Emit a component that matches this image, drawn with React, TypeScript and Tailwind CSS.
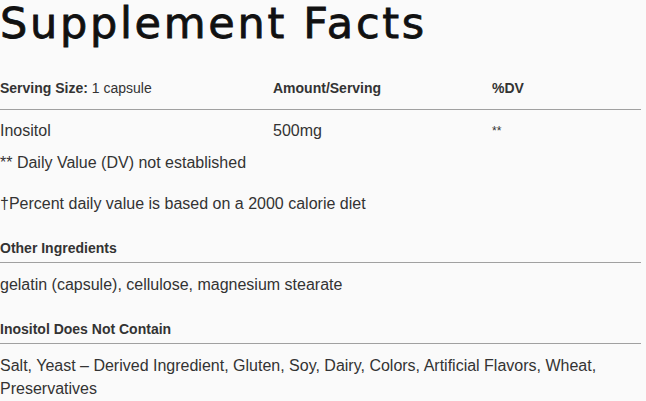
const rows = [{ name: "Inositol", amount: "500mg", dv: "**" }];

const App = () => {
  return (
    <div className="min-h-[401px] w-[646px] bg-[#fafafa] pr-[5px] text-[#333] font-['Liberation_Sans',Arial,sans-serif]">
      {/* Title */}
      <h1 className="text-[43px] leading-[47px] tracking-[2.7px] text-[#111] [-webkit-text-stroke:0.8px_#111] font-['DejaVu_Sans',sans-serif]">
        Supplement Facts
      </h1>

      {/* Facts table */}
      <div className="mt-[31px] grid grid-cols-[273px_219px_1fr] border-b border-[#a0a0a0] pb-[11px] text-[14px] leading-[20px]">
        <div>
          <span className="font-bold">Serving Size:</span> 1 capsule
        </div>
        <div className="font-bold">Amount/Serving</div>
        <div className="font-bold">%DV</div>
      </div>
      {rows.map((r) => (
        <div key={r.name} className="grid grid-cols-[273px_219px_1fr] pt-[9px] text-[16px] leading-[24px]">
          <div>{r.name}</div>
          <div>{r.amount}</div>
          <div className="text-[12px]">{r.dv}</div>
        </div>
      ))}
      <p className="mt-[8px] text-[16px] leading-[24px]">** Daily Value (DV) not established</p>
      <p className="mt-[17px] text-[16px] leading-[24px]">†Percent daily value is based on a 2000 calorie diet</p>

      {/* Other ingredients */}
      <h3 className="mt-[22px] border-b border-[#a0a0a0] pb-[4px] text-[14px] leading-[20px] font-bold">
        Other Ingredients
      </h3>
      <p className="pt-[10px] text-[16px] leading-[24px]">gelatin (capsule), cellulose, magnesium stearate</p>

      {/* Does not contain */}
      <h3 className="mt-[22px] border-b border-[#a0a0a0] pb-[4px] text-[14px] leading-[20px] font-bold">
        Inositol Does Not Contain
      </h3>
      <p className="pt-[10px] text-[16px] leading-[23px]">
        Salt, Yeast – Derived Ingredient, Gluten, Soy, Dairy, Colors, Artificial Flavors, Wheat, Preservatives
      </p>
    </div>
  );
};

export default App;
